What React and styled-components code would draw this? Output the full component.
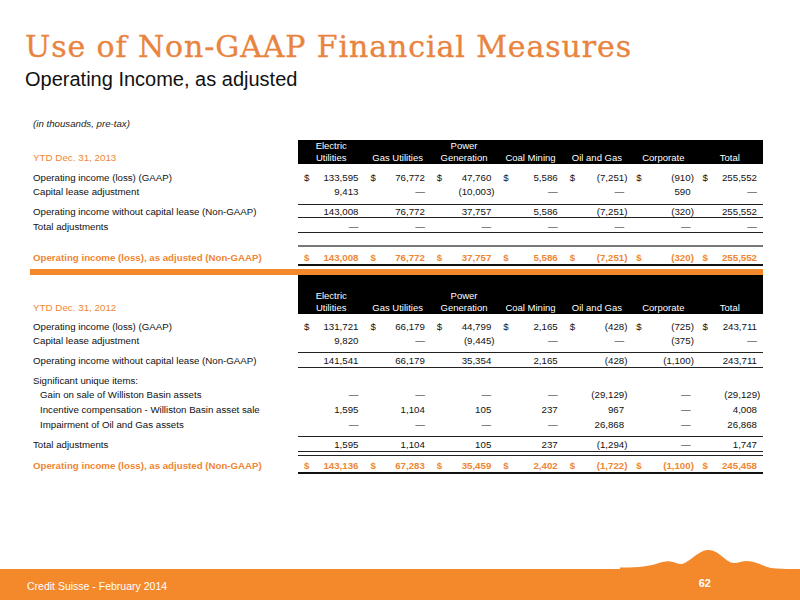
import styled, { createGlobalStyle, css } from 'styled-components';

const ORANGE = '#EF8633';
const BAND = '#F4892B';

const GlobalStyle = createGlobalStyle`
    body {
        margin: 0;
        background: #fff;
        font-family: 'Liberation Sans', Arial, sans-serif;
    }
`;

const COLUMNS = [
    ['Electric', 'Utilities'],
    ['Gas Utilities'],
    ['Power', 'Generation'],
    ['Coal Mining'],
    ['Oil and Gas'],
    ['Corporate'],
    ['Total'],
];

const DASHES = ['—', '—', '—', '—', '—', '—', '—'];

const table2013 = {
    title: 'YTD Dec. 31, 2013',
    headTop: 0,
    rows: [
        { label: 'Operating income (loss) (GAAP)', dollar: true, pt: 6.7, lh: 14, values: ['133,595', '76,772', '47,760', '5,586', '(7,251)', '(910)', '255,552'] },
        { label: 'Capital lease adjustment', lh: 14, pb: 5, bb: '1px solid #222', values: ['9,413', '—', '(10,003)', '—', '—', '590', '—'] },
        { label: 'Operating income without capital lease (Non-GAAP)', pt: 1.5, lh: 11, bb: '1px solid #222', values: ['143,008', '76,772', '37,757', '5,586', '(7,251)', '(320)', '255,552'] },
        { label: 'Total adjustments', pt: 2.5, lh: 11, bb: '1px solid #222', values: DASHES },
        { label: 'Operating income (loss), as adjusted (Non-GAAP)', total: true, dollar: true, mt: 12.5, bt: '2px solid #777', pt: 4.5, lh: 12, bb: '2px solid #111', values: ['143,008', '76,772', '37,757', '5,586', '(7,251)', '(320)', '255,552'] },
    ],
};

const table2012 = {
    title: 'YTD Dec. 31, 2012',
    headTop: 15,
    rows: [
        { label: 'Operating income (loss) (GAAP)', dollar: true, pt: 6.2, lh: 14, values: ['131,721', '66,179', '44,799', '2,165', '(428)', '(725)', '243,711'] },
        { label: 'Capital lease adjustment', lh: 14, pb: 4, bb: '1px solid #222', values: ['9,820', '—', '(9,445)', '—', '—', '(375)', '—'] },
        { label: 'Operating income without capital lease (Non-GAAP)', pt: 2, lh: 12, bb: '1px solid #222', values: ['141,541', '66,179', '35,354', '2,165', '(428)', '(1,100)', '243,711'] },
        { label: 'Significant unique items:', pt: 6, lh: 14 },
        { label: 'Gain on sale of Williston Basin assets', indent: true, lh: 14.7, values: ['—', '—', '—', '—', '(29,129)', '—', '(29,129)'] },
        { label: 'Incentive compensation - Williston Basin asset sale', indent: true, lh: 14.7, values: ['1,595', '1,104', '105', '237', '967', '—', '4,008'] },
        { label: 'Impairment of Oil and Gas assets', indent: true, lh: 14.7, pb: 3.5, bb: '1px solid #222', values: ['—', '—', '—', '—', '26,868', '—', '26,868'] },
        { label: 'Total adjustments', pt: 2.5, lh: 12, bb: '1px solid #222', values: ['1,595', '1,104', '105', '237', '(1,294)', '—', '1,747'] },
        { label: 'Operating income (loss), as adjusted (Non-GAAP)', total: true, dollar: true, mt: 3, bt: '1px solid #222', pt: 4, lh: 12, bb: '2px solid #111', values: ['143,136', '67,283', '35,459', '2,402', '(1,722)', '(1,100)', '245,458'] },
    ],
};

function Amount({ value }) {
    if (value.endsWith(')')) {
        return (
            <Num>
                {value.slice(0, -1)}
                <Paren>)</Paren>
            </Num>
        );
    }
    return <Num>{value}</Num>;
}

function Segment({ data, band }) {
    return (
        <Block>
            <HeadRow>
                <HeadLabel>{data.title}</HeadLabel>
                <HeadCells $top={data.headTop}>
                    {COLUMNS.map((lines) => (
                        <HeadCell key={lines.join(' ')}>
                            {lines.map((l) => (
                                <span key={l}>{l}</span>
                            ))}
                        </HeadCell>
                    ))}
                </HeadCells>
            </HeadRow>
            {data.rows.map((row) => (
                <Row key={row.label} $mt={row.mt} $total={row.total}>
                    <Label $m={row} $indent={row.indent}>
                        {row.label}
                    </Label>
                    <Cells $m={row}>
                        {(row.values || []).map((v, i) => (
                            <Cell key={i}>
                                <Dollar>{row.dollar ? '$' : ''}</Dollar>
                                <Amount value={v} />
                            </Cell>
                        ))}
                    </Cells>
                </Row>
            ))}
            {band && <Band />}
        </Block>
    );
}

export default function App() {
    return (
        <>
            <GlobalStyle />
            <Slide>
                <Title>Use of Non-GAAP Financial Measures</Title>
                <Subtitle>Operating Income, as adjusted</Subtitle>
                <Note>(in thousands, pre-tax)</Note>
                <Segment data={table2013} band />
                <Segment data={table2012} />
                <Footer>
                    <Mountain viewBox="0 0 180 31" preserveAspectRatio="none">
                        <path
                            d="M0,31 L0,28.5 C12,28.5 26,28 36,25 C42,23 46,22 50,22.4 C55,22.8 58,25.3 62,25 C69,23.5 78,12 87,11 C91,10.6 95,12 99,15 C105,19.5 109,24 114,24 C119,24 122,22 127,22 C135,22 143,27 151,29 C160,30.2 170,30 180,30 L180,31 Z"
                            fill={BAND}
                        />
                    </Mountain>
                    <FooterText>Credit Suisse - February 2014</FooterText>
                    <PageNo>62</PageNo>
                </Footer>
            </Slide>
        </>
    );
}

const metrics = css`
    padding-top: ${(p) => p.$m.pt || 0}px;
    padding-bottom: ${(p) => p.$m.pb || 0}px;
    line-height: ${(p) => p.$m.lh}px;
`;

const Slide = styled.div`
    width: 800px;
    height: 600px;
    display: flex;
    flex-direction: column;
    overflow: hidden;
    background: #fff;
`;

const Title = styled.h1`
    margin: 0;
    padding: 31px 0 0 25px;
    font-family: 'DejaVu Serif', serif;
    font-weight: normal;
    font-size: 30px;
    line-height: 32px;
    letter-spacing: 0.9px;
    -webkit-text-stroke: 0.35px #E9843F;
    color: #E9843F;
    white-space: nowrap;
`;

const Subtitle = styled.h2`
    margin: 5px 0 0 25px;
    font-weight: normal;
    font-size: 20px;
    line-height: 22px;
    color: #111;
`;

const Note = styled.div`
    margin: 28px 0 10px 33px;
    font-size: 9.7px;
    font-style: italic;
    line-height: 12px;
    color: #222;
`;

const Block = styled.div`
    margin-left: 30px;
    width: 733px;
    display: flex;
    flex-direction: column;
`;

const HeadRow = styled.div`
    display: grid;
    grid-template-columns: 268px 1fr;
`;

const HeadLabel = styled.div`
    align-self: end;
    padding-left: 3px;
    font-size: 9.8px;
    line-height: 12px;
    color: ${ORANGE};
`;

const HeadCells = styled.div`
    display: grid;
    grid-template-columns: repeat(7, 1fr);
    align-items: end;
    padding-top: ${(p) => p.$top}px;
    background: #000;
    color: #fff;
    font-size: 9.5px;
    line-height: 12px;
`;

const HeadCell = styled.div`
    display: flex;
    flex-direction: column;
    align-items: center;
    white-space: nowrap;
`;

const Row = styled.div`
    display: grid;
    grid-template-columns: 268px 1fr;
    margin-top: ${(p) => p.$mt || 0}px;
    font-size: 9.7px;
    color: ${(p) => (p.$total ? ORANGE : '#111')};
    font-weight: ${(p) => (p.$total ? 'bold' : 'normal')};
`;

const Label = styled.div`
    ${metrics}
    padding-left: ${(p) => (p.$indent ? 10 : 3)}px;
    border-top: ${(p) => p.$m.bt || '0 solid'};
    border-bottom: ${(p) => p.$m.bb || '0 solid'};
    border-color: transparent;
    white-space: nowrap;
`;

const Cells = styled.div`
    ${metrics}
    display: grid;
    grid-template-columns: repeat(7, 1fr);
    border-top: ${(p) => p.$m.bt || 'none'};
    border-bottom: ${(p) => p.$m.bb || 'none'};
`;

const Cell = styled.div`
    display: flex;
    justify-content: space-between;
    padding: 0 6px;
    white-space: nowrap;
`;

const Dollar = styled.span``;

const Num = styled.span`
    text-align: right;
`;

const Paren = styled.span`
    margin-right: -3.3px;
`;

const Band = styled.div`
    height: 6px;
    margin-top: 3.5px;
    background: ${BAND};
`;

const Footer = styled.footer`
    position: relative;
    margin-top: auto;
    height: 31px;
    display: flex;
    align-items: center;
    background: ${BAND};
    color: #fff;
`;

const Mountain = styled.svg`
    position: absolute;
    right: 0;
    bottom: calc(100% - 1px);
    width: 180px;
    height: 31px;
    display: block;
`;

const FooterText = styled.span`
    margin: 3px 0 0 27px;
    font-size: 10.5px;
`;

const PageNo = styled.span`
    margin: -3px 89px 0 auto;
    font-size: 11px;
    font-weight: bold;
`;
